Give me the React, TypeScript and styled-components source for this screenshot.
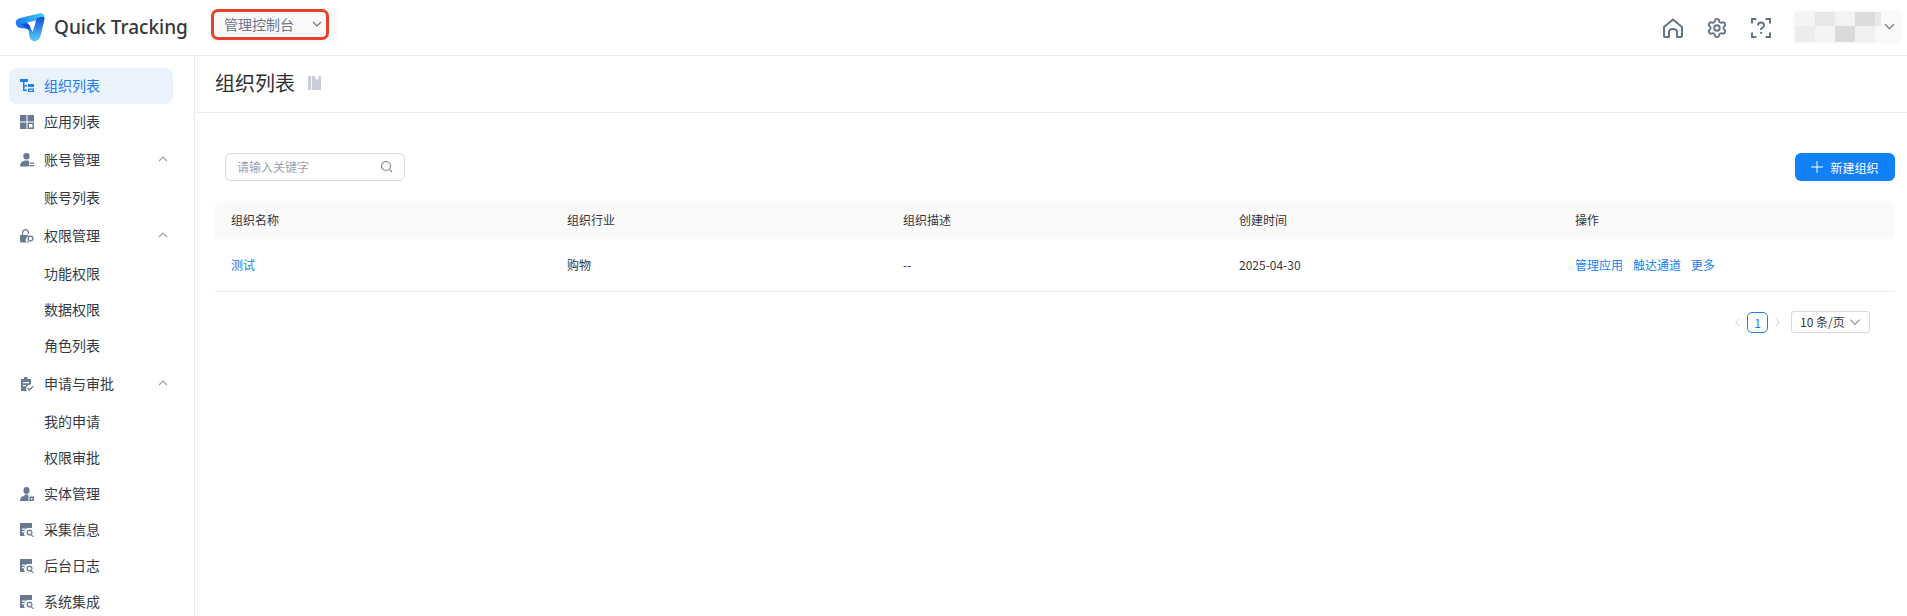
import React from "react";
import styled, { createGlobalStyle } from "styled-components";
import { Settings } from "lucide-react";

const Global = createGlobalStyle`
  html, body { margin: 0; padding: 0; height: 616px; overflow: hidden; background: #fff; }
  body { font-family: "Noto Sans CJK SC", "Noto Sans", sans-serif; }
  * { box-sizing: border-box; }
`;
const Page = styled.div`width: 1907px; height: 616px; display: flex; flex-direction: column; overflow: hidden;`;
const Header = styled.header`
  height: 56px; flex: none; display: flex; align-items: center; border-bottom: 1px solid #ebebeb; padding: 0 4px 0 15px;
`;
const LogoWrap = styled.div`display: flex; align-items: center; gap: 9px; width: 193px; margin-top: -2px;`;
const Brand = styled.span`font-family: "Noto Sans", sans-serif; font-size: 19px; font-weight: 500; color: #33373d; line-height: 28px;`;
const Console = styled.div`
  width: 130px; height: 36px; background: #fafafb; border-radius: 8px; padding: 1px 9px 4px 3px; margin-top: -3px; display: flex;
`;
const ConsoleInner = styled.div`
  width: 118px; height: 31px; border: 3px solid #e8402a; border-radius: 7px; display: flex; align-items: center; justify-content: space-between; padding: 0 4px 1px 10px; font-size: 14px; color: #6d7688;
`;
const Right = styled.div`margin-left: auto; display: flex; align-items: center;`;
const IconBtn = styled.span`display: flex; width: 44px; justify-content: center; color: #64738c;`;
const UserBox = styled.div`
  width: 110px; height: 34px; margin: -2px 0 0 10px; border-radius: 6px; background: #fafafa; display: flex; align-items: center; padding-left: 2px; color: #808080;
`;
const Mosaic = styled.div`
  width: 86px; height: 30px; display: grid; grid-template-columns: 20px 20px 20px 20px 6px; grid-template-rows: 14px 16px; margin-right: 3px;
`;
const Cell = styled.i<{ $c: string }>`background: ${(p) => p.$c};`;
const Body = styled.div`flex: 1; display: flex; min-height: 0;`;
const Side = styled.aside`width: 195px; flex: none; border-right: 1px solid #ebebeb; padding: 12px 21px 0 9px;`;
const Row = styled.div<{ $active?: boolean; $h?: number; $sub?: boolean }>`
  height: ${(p) => p.$h ?? 36}px; display: flex; align-items: center; font-size: 14px; border-radius: 8px;
  padding: 0 4px 2px ${(p) => (p.$sub ? 35 : 11)}px;
  color: ${(p) => (p.$active ? "#1a80f5" : "#333a45")}; background: ${(p) => (p.$active ? "#e9f2fd" : "transparent")};
`;
const IconSlot = styled.span<{ $active?: boolean }>`
  width: 14px; height: 14px; flex: none; margin: 2px 10px 0 0; display: flex; color: ${(p) => (p.$active ? "#1a80f5" : "#6b7a93")};
`;
const RowCaret = styled.span`margin-left: auto; margin-right: 1px; display: flex; color: #9aa3b0;`;
const Main = styled.main`flex: 1; min-width: 0; display: flex; flex-direction: column;`;
const TitleBar = styled.div`height: 57px; flex: none; border-bottom: 1px solid #ebedf0; display: flex; align-items: center; padding: 0 0 2px 20px; gap: 13px;`;
const Title = styled.h1`margin: 0; font-size: 20px; font-weight: 400; color: #2e3033; line-height: 28px;`;
const Content = styled.div`padding: 40px 12px 0 20px;`;
const Toolbar = styled.div`display: flex; justify-content: space-between; align-items: center; padding-left: 10px; height: 28px;`;
const Search = styled.div`
  width: 180px; height: 28px; border: 1px solid #d9d9dc; border-radius: 6px; display: flex; align-items: center; justify-content: space-between; padding: 0 11px 1px; font-size: 12px; color: #9aa1ad;
`;
const AddBtn = styled.div`
  width: 100px; height: 28px; border-radius: 6px; background: #1081fb; color: #fff; font-size: 12px; display: flex; align-items: center; justify-content: center; gap: 7px;
`;
const TableGrid = styled.div`display: grid; grid-template-columns: repeat(5, 336px); margin-top: 20px;`;
const Th = styled.div<{ $first?: boolean; $last?: boolean }>`
  height: 38px; background: #fafafa; display: flex; align-items: center; padding: 0 0 2px 16px; font-size: 12px; color: #33373d;
  border-radius: ${(p) => (p.$first ? "8px 0 0 0" : p.$last ? "0 8px 0 0" : "0")};
`;
const Td = styled.div`
  height: 53px; border-bottom: 1px solid #ebedf0; display: flex; align-items: center; padding: 0 0 2px 16px; gap: 10px; font-size: 12px; color: #33373d;
`;
const Link = styled.span`color: #1a80f5;`;
const Pager = styled.div`display: flex; justify-content: flex-end; align-items: center; margin-top: 19px; padding-right: 25px; color: #c4c8cf;`;
const PageNum = styled.div`
  width: 21px; height: 21px; border: 1px solid #1a80f5; border-radius: 5px; margin: 0 5px; display: flex; align-items: center; justify-content: center; font-size: 12px; color: #1a80f5;
`;
const PageSize = styled.div`
  width: 79px; height: 22px; margin-left: 9px; border: 1px solid #d9d9dc; border-radius: 3px; display: flex; align-items: center; padding: 0 4px 1px 8px; gap: 4px; font-size: 12px; color: #33373d; white-space: nowrap;
`;
const SizeCaret = styled.span`display: flex; color: #8a92a0;`;

const Chevron = ({ dir = "down", size = 10, sw = 1.2 }: { dir?: "up" | "down" | "left" | "right"; size?: number; sw?: number }) => {
  const d = { up: "M1 7 L5 3 L9 7", down: "M1 3 L5 7 L9 3", left: "M7 1 L3 5 L7 9", right: "M3 1 L7 5 L3 9" }[dir];
  return (
    <svg width={size} height={size} viewBox="0 0 10 10" fill="none" stroke="currentColor" strokeWidth={sw}>
      <path d={d} />
    </svg>
  );
};
const Logo = () => (
  <svg width="30" height="30" viewBox="0 0 30 30">
    <defs>
      <linearGradient id="lg1" x1="0" y1="0.4" x2="1" y2="0"><stop offset="0" stopColor="#1a7cf0" /><stop offset="1" stopColor="#45d0f7" /></linearGradient>
      <linearGradient id="lg2" x1="0" y1="0" x2="0" y2="1"><stop offset="0" stopColor="#0f4fd8" /><stop offset="1" stopColor="#5accf7" /></linearGradient>
    </defs>
    <path d="M1 12 C0 9 2 7 5 6 L24 1.500 C28 .5 30 3 29.500 7 L22 10 L13 17 L5 16 C3 15.500 1.500 14 1 12 Z" fill="url(#lg1)" />
    <path d="M6 12 L14 11 L17 21 L13 17.500 Z" fill="#0f4fd8" />
    <path d="M22 6 C26 5 29.800 4 29.500 7 L26 22 C25 28 21 30 18 29 C15 28 14.500 25 14 21 L13.500 17 L18 18 Z" fill="url(#lg2)" />
    <path d="M12 10.500 L21 8.500 L17.500 20 C17 17 15 13.500 12 10.500 Z" fill="#fff" />
  </svg>
);
const Ico = ({ d }: { d: string }) => (
  <svg width="14" height="14" viewBox="0 0 14 14" fill="currentColor" fillRule="evenodd"><path d={d} /></svg>
);
const P = {
  org: "M0 0h8v3H4.500v3H7v1.500H4.500v3H7V12H3V3H0z M8 5h6v3H8z M8 9.500h6v3.500H8z M9.500 10.700v1.300h3v-1.300z",
  app: "M0 0h6.500v6.500H0z M7.500 0H14v6.500H7.500z M0 7.500h6.500V14H0z M7.500 7.500H14V14H7.500z M9 9v3.500h3.500V9z",
  user: "M6.500 0a3.200 3.200 0 110 6.400 3.200 3.200 0 010-6.400z M0 13.500c0-4 2.500-6 6.500-6 1 0 2 .1 2.500 .4V13.500z M9.500 9.500H14v1.200H9.500z M9.500 12H14v1.300H9.500z",
  perm: "M0 6h8v1.500a3.800 3.800 0 00-1.500 6H1.500A1.500 1.500 0 010 12z M2 6V3.500a3.500 3.500 0 017 0V5H7.800V3.500a2.300 2.300 0 00-4.600 0V6z M10.500 6.500a3 3 0 110 6 3 3 0 010-6z M10.500 7.800a1.700 1.700 0 100 3.400 1.700 1.700 0 000-3.400z M8 12l1 1-1.500 1-.7-.7z",
  apply: "M1 2h3V0h3.500v2H11v5.500a4.500 4.500 0 00-4.500 6.500H1z M3 5h6v1.200H3z M3 8h3v1.200H3z M8 10.500l1.500 1.500 3.300-3.300.9.900-4.200 4.300-2.400-2.400z",
  entity: "M6.500 0a3.200 3.200 0 013 3.500 3.200 3.200 0 01-3 3.500 3.200 3.200 0 01-3-3.500 3.200 3.200 0 013-3.500z M0 14c0-3 1-4.500 4-5l1-1.500h3L8.500 9V14z M9.500 9.500H14V14H9.500z M11 11v1.500h1.500V11z",
  collect: "M0 0h12v5H7.500A5 5 0 005 13H0z M2 5.500h3.500v1.200H2z M2 8h2.500v1.200H2z M9.500 6.500a3 3 0 110 6 3 3 0 010-6z M9.500 7.700a1.800 1.800 0 100 3.600 1.800 1.800 0 000-3.600z M11.500 11.500l2.500 2-.7.700-2.500-2z",
};
type Item = { t: string; i?: keyof typeof P; active?: boolean; group?: boolean; sub?: boolean };
const items: Item[] = [
  { t: "组织列表", i: "org", active: true },
  { t: "应用列表", i: "app" },
  { t: "账号管理", i: "user", group: true },
  { t: "账号列表", sub: true },
  { t: "权限管理", i: "perm", group: true },
  { t: "功能权限", sub: true },
  { t: "数据权限", sub: true },
  { t: "角色列表", sub: true },
  { t: "申请与审批", i: "apply", group: true },
  { t: "我的申请", sub: true },
  { t: "权限审批", sub: true },
  { t: "实体管理", i: "entity" },
  { t: "采集信息", i: "collect" },
  { t: "后台日志", i: "collect" },
  { t: "系统集成", i: "collect" },
];
const mosaic = ["#f4f4f4","#e8e8e8","#f3f3f3","#dcdcdc","#e8e8e8","#ececec","#f4f4f4","#dadada","#f0f0f0","#f8f8f8"];

export default function App() {
  return (
    <Page>
      <Global />
      <Header>
        <LogoWrap><Logo /><Brand>Quick Tracking</Brand></LogoWrap>
        <Console><ConsoleInner>管理控制台<Chevron size={10} /></ConsoleInner></Console>
        <Right>
          <IconBtn>
            <svg width="22" height="22" viewBox="0 0 22 22" fill="none" stroke="currentColor" strokeWidth="2" strokeLinejoin="round"><path d="M2 10 L11 2.500 L20 10 V19 Q20 20 19 20 H15 V15 Q15 12 11 12 Q7 12 7 15 V20 H3 Q2 20 2 19 Z" /></svg>
          </IconBtn>
          <IconBtn>
            <Settings size={22} strokeWidth={2} />
          </IconBtn>
          <IconBtn>
            <svg width="20" height="20" viewBox="0 0 20 20" fill="none" stroke="currentColor" strokeWidth="2"><path d="M1 5.500V1h4.500 M14.500 1H19v4.500 M19 14.500V19h-4.500 M5.500 19H1v-4.500" /><path d="M7 7.500a3 3 0 116 0c0 2-3 2-3 4.500" /><path d="M10 14v1.800" /></svg>
          </IconBtn>
          <UserBox>
            <Mosaic>{mosaic.map((c, i) => <Cell key={i} $c={c} />)}</Mosaic>
            <Chevron size={11} />
          </UserBox>
        </Right>
      </Header>
      <Body>
        <Side>
          {items.map((it) => (
            <Row key={it.t} $active={it.active} $h={it.group ? 40 : 36} $sub={it.sub}>
              {it.i && <IconSlot $active={it.active}><Ico d={P[it.i]} /></IconSlot>}
              {it.t}
              {it.group && <RowCaret><Chevron dir="up" size={10} /></RowCaret>}
            </Row>
          ))}
        </Side>
        <Main>
          <TitleBar>
            <Title>组织列表</Title>
            <svg width="13" height="14" viewBox="0 0 13 14" fill="#c9ced6"><path d="M0 0h3v14H0z M3.800 0h3.700v4l1.500-1 1.500 1V0H13v14H3.800z" /></svg>
          </TitleBar>
          <Content>
            <Toolbar>
              <Search>
                请输入关键字
                <svg width="13" height="13" viewBox="0 0 13 13" fill="none" stroke="#7d8796" strokeWidth="1.1"><circle cx="6" cy="6" r="4.500" /><path d="M9.500 9.500L12 12" /></svg>
              </Search>
              <AddBtn>
                <svg width="12" height="12" viewBox="0 0 12 12" stroke="#fff" strokeWidth="1"><path d="M6 0v12M0 6h12" /></svg>
                新建组织
              </AddBtn>
            </Toolbar>
            <TableGrid>
              <Th $first>组织名称</Th><Th>组织行业</Th><Th>组织描述</Th><Th>创建时间</Th><Th $last>操作</Th>
              <Td><Link>测试</Link></Td><Td>购物</Td><Td>--</Td><Td>2025-04-30</Td>
              <Td><Link>管理应用</Link><Link>触达通道</Link><Link>更多</Link></Td>
            </TableGrid>
            <Pager>
              <Chevron dir="left" size={9} sw={1} />
              <PageNum>1</PageNum>
              <Chevron dir="right" size={9} sw={1} />
              <PageSize>10 条/页<SizeCaret><Chevron size={12} sw={1} /></SizeCaret></PageSize>
            </Pager>
          </Content>
        </Main>
      </Body>
    </Page>
  );
}
